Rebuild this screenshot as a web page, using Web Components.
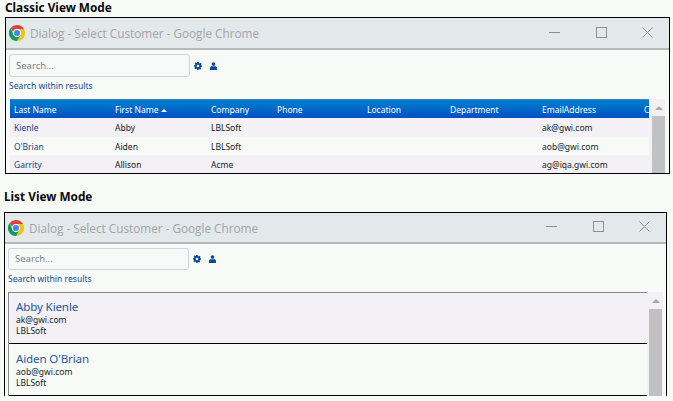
<!DOCTYPE html>
<html lang="en">
  <head>
    <meta charset="UTF-8" />
    <title>Select Customer</title>
    <style>
      html, body { margin: 0; height: 401px; overflow: hidden; background: #f8faf7; }
      body { font-family: "Noto Sans", sans-serif; color: #111; }
      dialog-window.classic { margin: 0 0 0 5px; width: 665px; height: 157px; --bar-h: 30px; --input-h: 23px; }
      dialog-window.list { margin: 0 0 0 4px; width: 663px; height: 184px; --bar-h: 29px; --input-h: 22px; --sb-gap: 1px; }
    </style>
  </head>
  <body>
    <mode-heading style="--h:17px">Classic View Mode</mode-heading>
    <dialog-window class="classic" closed>
      <search-bar></search-bar>
      <customer-table></customer-table>
    </dialog-window>

    <mode-heading style="--h:38px;--pt:15px;--ml:4px">List View Mode</mode-heading>
    <dialog-window class="list">
      <search-bar></search-bar>
      <customer-list></customer-list>
    </dialog-window>

    <template id="window-template">
      <style>
        :host { display: flex; flex-direction: column; box-sizing: border-box; overflow: hidden;
          border: 1px solid #000; background: #f8faf7; }
        :host(:not([closed])) { border-bottom: 0; }
        .bar { flex: none; height: var(--bar-h); display: flex; align-items: center;
          background: #e3e8eb; border-bottom: 2px solid #b9b9bd; padding: 0 16px 0 3px; }
        .bar svg.logo { width: 16px; height: 16px; margin-right: 5px; flex: none; }
        .title { flex: 1; font: 11.75px "Open Sans", sans-serif; color: #a2a4a6; white-space: nowrap; }
        .controls { display: flex; gap: 35.5px; margin-top: -2px; }
        .controls svg { width: 11px; height: 11px; display: block; }
        .content { flex: 1; min-height: 0; display: flex; flex-direction: column; padding: 4px 0 0 3px; }
      </style>
      <div class="bar">
        <svg class="logo" viewBox="0 0 16 16">
          <path fill="#db4437" d="M8 0a8 8 0 0 1 6.93 4H8a4 4 0 0 0-3.85 2.9L1.76 2.97A8 8 0 0 1 8 0z"/>
          <path fill="#f4c20d" d="M14.93 4A8 8 0 0 1 8 16l3.46-6A4 4 0 0 0 11.46 6 4 4 0 0 0 8 4z"/>
          <path fill="#0f9d58" d="M1.76 2.97 4.54 10A4 4 0 0 0 11.46 10L8 16A8 8 0 0 1 1.76 2.97z"/>
          <circle cx="8" cy="8" r="3.9" fill="#f4f6f8"/>
          <circle cx="8" cy="8" r="3" fill="#4285f4"/>
        </svg>
        <span class="title">Dialog - Select Customer - Google Chrome</span>
        <div class="controls">
          <svg viewBox="0 0 11 11"><path d="M0 5.5h11" stroke="#8f8f8f" fill="none"/></svg>
          <svg viewBox="0 0 11 11"><rect x=".5" y=".5" width="10" height="10" stroke="#8f8f8f" fill="none"/></svg>
          <svg viewBox="0 0 11 11"><path d="M.5.5l10 10M10.5.5l-10 10" stroke="#8f8f8f" fill="none"/></svg>
        </div>
      </div>
      <div class="content"><slot></slot></div>
    </template>

    <template id="search-template">
      <style>
        :host { display: block; flex: none; }
        .row { display: flex; align-items: center; }
        .input { box-sizing: border-box; width: 181px; height: var(--input-h); border: 1px solid #ced4e0; border-radius: 3px;
          background: #f8faf7; padding: 0 0 1px 6px; display: flex; align-items: center;
          font: 9.5px "Noto Sans", sans-serif; color: #7b8288; }
        svg { display: block; flex: none; }
        .gear { width: 8px; height: 8px; margin-left: 4px; }
        .user { width: 7px; height: 8px; margin-left: 8px; }
        .link { font: 8.6px "Noto Sans", sans-serif; color: #134a8c; margin-top: 3px; line-height: 13px; }
      </style>
      <div class="row">
        <div class="input">Search...</div>
        <svg class="gear" viewBox="0 0 9 9">
          <path fill="#0b4a9a" fill-rule="evenodd" d="M3.6 0h1.8l.2 1.2.8.4 1-.7 1.2 1.2-.7 1 .4.8L9 3.6v1.8l-1.2.2-.4.8.7 1-1.2 1.2-1-.7-.8.4L5.4 9H3.6l-.2-1.2-.8-.4-1 .7L.4 6.9l.7-1-.4-.8L-.1 5V3.6l1.2-.2.4-.8-.7-1L1.6.4l1 .7.8-.4zM4.5 3a1.5 1.5 0 1 0 0 3 1.5 1.5 0 0 0 0-3z"/>
        </svg>
        <svg class="user" viewBox="0 0 8 9">
          <circle cx="4" cy="2.2" r="2.1" fill="#0b4a9a"/>
          <path fill="#0b4a9a" d="M0 9V6.8C0 5.5 1 4.8 2 4.8h4c1 0 2 .7 2 2V9z"/>
        </svg>
      </div>
      <div class="link">Search within results</div>
    </template>

    <template id="scroll-template">
      <style>
        :host { display: flex; flex-direction: column; align-items: flex-end; flex: none; width: 16px; box-sizing: border-box;
          padding-right: var(--sb-gap, 0); background: #f3f1f5; overflow: hidden; }
        .btn { flex: none; height: 17px; width: 13px; display: flex; align-items: center; justify-content: center; }
        .btn i { width: 0; height: 0; border: 4px solid transparent; border-top: 0; border-bottom: 4px solid #a8a8a8; }
        .thumb { flex: 1; width: 13px; background: #c1c1c3; }
      </style>
      <div class="btn"><i></i></div>
      <div class="thumb"></div>
    </template>

    <template id="table-template">
      <style>
        :host { display: flex; flex: 1; min-height: 0; margin: 6px 0 0 1px; width: 655px; overflow: hidden; }
        .wrap { width: 639px; overflow: hidden; flex: none; font: 8.5px "Noto Sans", sans-serif; }
        .row { display: grid; grid-template-columns: 101px 96px 66px 90px 83px 92px 102px 40px; white-space: nowrap; align-items: center; height: 18px; color: #1a1a1a; }
        .row div { padding-left: 4px; overflow: hidden; }
        .row div:first-child { color: #1a4284; }
        .row:nth-child(even) { background: #f3f1f5; }
        .row.h1 { height: 19px; background: linear-gradient(#0080cf, #0050c2); border-top: 1px solid #3d7fae; box-sizing: border-box; }
        .row.h1 div { color: #fff; }
        .row.tall { height: 19px; }
        .sort { display: inline-block; width: 0; height: 0; border: 3px solid transparent; border-top: 0; border-bottom: 3px solid #fff; margin: 0 0 1px 3px; }
      </style>
      <div class="wrap">
        <div class="row h1"><div>Last Name</div><div>First Name<i class="sort"></i></div><div>Company</div><div>Phone</div><div>Location</div><div>Department</div><div>EmailAddress</div><div>C</div></div>
        <div class="row tall"><div>Kienle</div><div>Abby</div><div>LBLSoft</div><div></div><div></div><div></div><div>ak@gwi.com</div><div></div></div>
        <div class="row"><div>O'Brian</div><div>Aiden</div><div>LBLSoft</div><div></div><div></div><div></div><div>aob@gwi.com</div><div></div></div>
        <div class="row"><div>Garrity</div><div>Allison</div><div>Acme</div><div></div><div></div><div></div><div>ag@iqa.gwi.com</div><div></div></div>
      </div>
      <scroll-bar></scroll-bar>
    </template>

    <template id="list-template">
      <style>
        :host { display: flex; flex: 1; min-height: 0; margin-top: 6px; width: 655px; }
        .items { width: 639px; flex: none; box-sizing: border-box; border-left: 1px solid #888; border-top: 1px solid #888; }
        .item { box-sizing: border-box; height: 51px; padding: 7px 0 0 7px; border-bottom: 1px solid #000; font: 8.5px/11px "Noto Sans", sans-serif; color: #1a1a1a; }
        .item + .item { height: 52px; padding-top: 8px; }
        .item:nth-child(odd) { background: #f3f1f5; }
        .name { font-size: 11.6px; letter-spacing: -.15px; line-height: 14px; color: #1f5aa0; }
      </style>
      <div class="items">
        <div class="item"><div class="name">Abby Kienle</div><div>ak@gwi.com</div><div>LBLSoft</div></div>
        <div class="item"><div class="name">Aiden O'Brian</div><div>aob@gwi.com</div><div>LBLSoft</div></div>
      </div>
      <scroll-bar></scroll-bar>
    </template>

    <script type="module">
      function register(tag, templateId) {
        customElements.define(tag, class extends HTMLElement {
          constructor() {
            super();
            this.attachShadow({ mode: "open" });
            const template = document.getElementById(templateId);
            this.shadowRoot.appendChild(template.content.cloneNode(true));
          }
        });
      }

      class ModeHeading extends HTMLElement {
        constructor() {
          super();
          this.attachShadow({ mode: "open" });
          this.shadowRoot.innerHTML = `<style>
            :host { display: block; height: var(--h); box-sizing: border-box; padding-top: var(--pt, 0); margin-left: var(--ml, 5px);
              font: bold 11.8px/15px "Noto Sans", sans-serif; color: #0a0a0a; }
          </style><slot></slot>`;
        }
      }
      customElements.define("mode-heading", ModeHeading);

      register("dialog-window", "window-template");
      register("search-bar", "search-template");
      register("scroll-bar", "scroll-template");
      register("customer-table", "table-template");
      register("customer-list", "list-template");
    </script>
  </body>
</html>
